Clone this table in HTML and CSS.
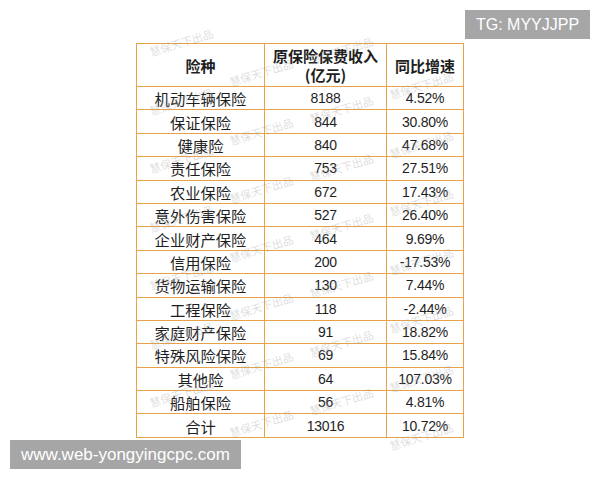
FILE: index.html
```html
<!DOCTYPE html>
<html lang="zh">
<head>
<meta charset="utf-8">
<link rel="stylesheet" href="styles.css">
</head>
<body>
<div class="page">
  <table class="data">
    <colgroup><col class="c1"><col class="c2"><col class="c3"></colgroup>
    <thead>
      <tr><th>险种</th><th><span class="hl">原保险保费收入</span><span class="hl">(亿元)</span></th><th>同比增速</th></tr>
    </thead>
    <tbody>
      <tr><td>机动车辆保险</td><td class="num">8188</td><td class="num">4.52%</td></tr>
      <tr><td>保证保险</td><td class="num">844</td><td class="num">30.80%</td></tr>
      <tr><td>健康险</td><td class="num">840</td><td class="num">47.68%</td></tr>
      <tr><td>责任保险</td><td class="num">753</td><td class="num">27.51%</td></tr>
      <tr><td>农业保险</td><td class="num">672</td><td class="num">17.43%</td></tr>
      <tr><td>意外伤害保险</td><td class="num">527</td><td class="num">26.40%</td></tr>
      <tr><td>企业财产保险</td><td class="num">464</td><td class="num">9.69%</td></tr>
      <tr><td>信用保险</td><td class="num">200</td><td class="num">-17.53%</td></tr>
      <tr><td>货物运输保险</td><td class="num">130</td><td class="num">7.44%</td></tr>
      <tr><td>工程保险</td><td class="num">118</td><td class="num">-2.44%</td></tr>
      <tr><td>家庭财产保险</td><td class="num">91</td><td class="num">18.82%</td></tr>
      <tr><td>特殊风险保险</td><td class="num">69</td><td class="num">15.84%</td></tr>
      <tr><td>其他险</td><td class="num">64</td><td class="num">107.03%</td></tr>
      <tr><td>船舶保险</td><td class="num">56</td><td class="num">4.81%</td></tr>
      <tr><td>合计</td><td class="num">13016</td><td class="num">10.72%</td></tr>
    </tbody>
  </table>

  <div class="marks" aria-hidden="true">
    <div class="mcol m-a"><span>慧保天下出品</span><span>慧保天下出品</span><span>慧保天下出品</span><span>慧保天下出品</span><span>慧保天下出品</span><span>慧保天下出品</span><span>慧保天下出品</span></div>
    <div class="mcol m-b"><span>慧保天下出品</span><span>慧保天下出品</span><span>慧保天下出品</span><span>慧保天下出品</span><span>慧保天下出品</span><span>慧保天下出品</span><span>慧保天下出品</span></div>
    <div class="mcol m-c"><span>慧保天下出品</span><span>慧保天下出品</span><span>慧保天下出品</span><span>慧保天下出品</span><span>慧保天下出品</span><span>慧保天下出品</span><span>慧保天下出品</span></div>
    <div class="mcol m-d"><span>慧保天下出品</span><span>慧保天下出品</span><span>慧保天下出品</span><span>慧保天下出品</span><span>慧保天下出品</span><span>慧保天下出品</span><span>慧保天下出品</span></div>
  </div>

  <div class="tag tag-tg">TG: MYYJJPP</div>
  <div class="tag tag-url">www.web-yongyingcpc.com</div>
</div>
</body>
</html>
```
FILE: styles.css
```css
html, body {
  margin: 0;
  padding: 0;
  background: #ffffff;
}
.page {
  position: relative;
  width: 600px;
  height: 480px;
  padding-top: 43px;
  box-sizing: border-box;
  overflow: hidden;
  font-family: "Liberation Sans", "Noto Sans CJK SC", sans-serif;
}
.data {
  border-collapse: collapse;
  table-layout: fixed;
  width: 327px;
  margin-left: 136px;
  color: #1e1e1e;
}
.c1 { width: 128px; }
.c2 { width: 122px; }
.c3 { width: 77px; }
.data th, .data td {
  border: 1px solid #e6a246;
  padding: 0;
  text-align: center;
  font-family: "Noto Sans CJK SC", "Liberation Sans", sans-serif;
}
.data th {
  height: 42px;
  font-size: 15px;
  font-weight: 700;
  line-height: 19px;
}
.hl {
  display: block;
  line-height: 19px;
}
.data td {
  height: 22.4px;
  font-size: 15.3px;
  line-height: 18px;
}
.data td.num {
  font-family: "Liberation Sans", sans-serif;
  font-size: 14px;
  letter-spacing: -0.25px;
}
.marks {
  position: absolute;
  top: 0;
  left: 148px;
  display: grid;
  grid-template-columns: repeat(4, 80px);
  pointer-events: none;
}
.mcol {
  display: flex;
  flex-direction: column;
}
.mcol span {
  height: 58.5px;
  display: flex;
  align-items: center;
  white-space: nowrap;
  font-family: "Noto Sans CJK SC", sans-serif;
  font-size: 11px;
  color: rgba(160, 160, 160, 0.36);
  transform: rotate(-17deg);
}
.m-a { padding-top: 11px; }
.m-b { padding-top: 41px; }
.m-c { padding-top: 19px; }
.m-d { padding-top: 54px; }
.tag {
  position: absolute;
  background: #a6a6a6;
  color: #ffffff;
  height: 29px;
  line-height: 29px;
  font-family: "Liberation Sans", sans-serif;
}
.tag-tg {
  top: 10px;
  left: 465px;
  width: 125px;
  font-size: 16px;
  text-align: center;
}
.tag-url {
  top: 440px;
  left: 10px;
  width: 231px;
  font-size: 17px;
  padding-left: 11px;
  box-sizing: border-box;
}
```
